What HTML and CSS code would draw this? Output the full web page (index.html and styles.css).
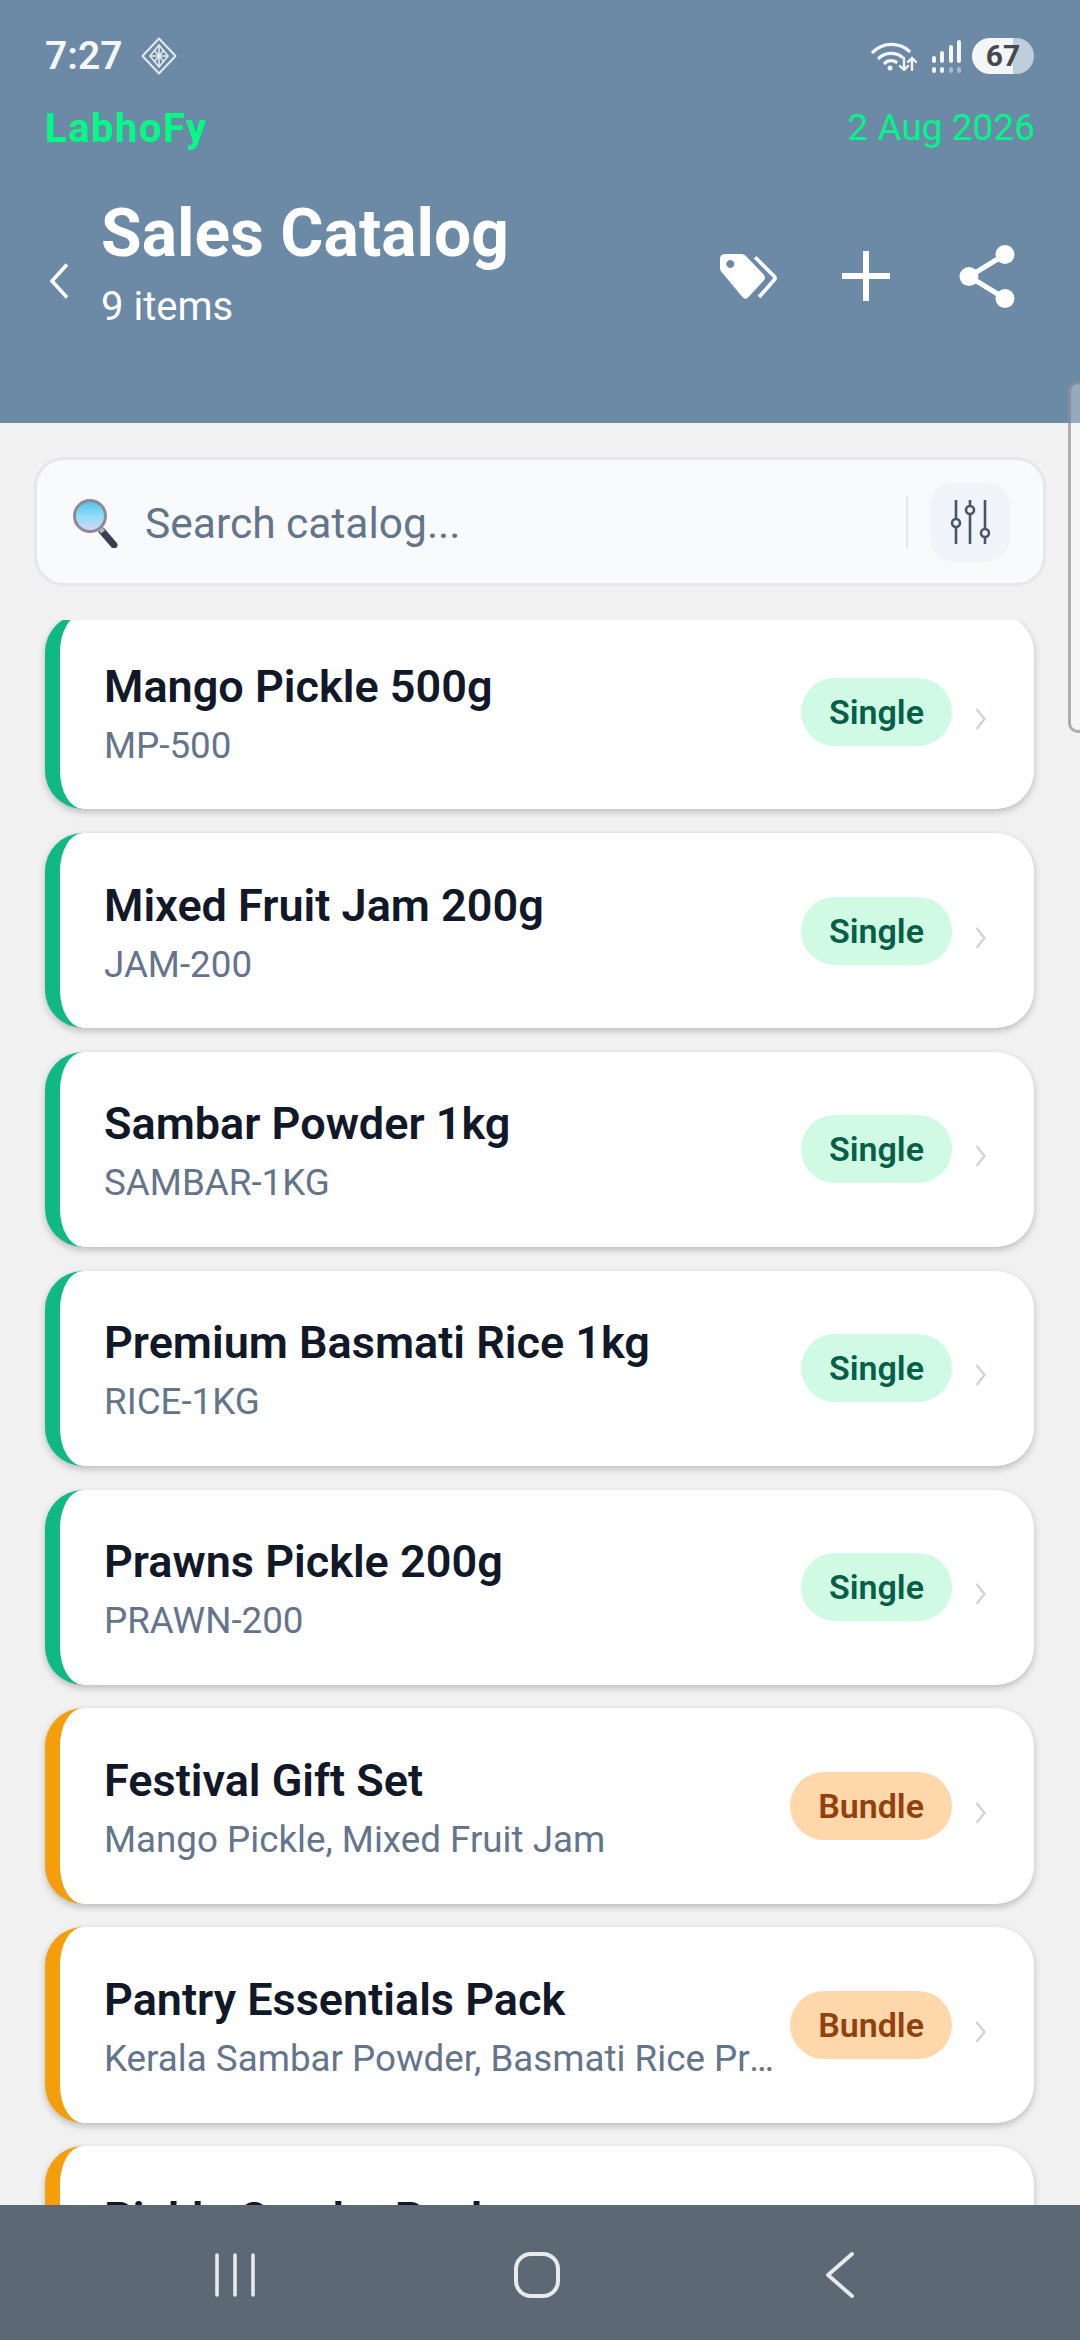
FILE: index.html
```html
<!DOCTYPE html>
<html lang="en">
<head>
<meta charset="utf-8">
<title>Sales Catalog</title>
<link rel="stylesheet" href="styles.css">
</head>
<body>
<div class="app">
  <header class="header">
    <div class="status">
      <div class="status-left">
        <span class="time">7:27</span>
        <svg class="status-diamond" viewBox="0 0 36 38" fill="none" stroke="#e4eaf0" stroke-width="2">
          <path d="M18 1.500 34.500 19 18 36.500 1.500 19Z" stroke-linejoin="round"/>
          <path d="M18 8 27 19 18 30 9 19Z" stroke-width="1.600"/>
          <path d="M9 19H27M18 8V30M13 13l10 12M23 13 13 25" stroke-width="1.600"/>
        </svg>
      </div>
      <div class="status-right">
        <svg class="wifi" viewBox="0 0 47 29" fill="none" stroke="#f3f5f7" stroke-width="3.400" stroke-linecap="round">
          <path d="M2 10C12 0 28 0 38 9"/>
          <path d="M8 16C14 10 25 10 31 15"/>
          <path d="M14 21C17 18 22 18 25 20"/>
          <circle cx="19" cy="26" r="2.500" fill="#f3f5f7" stroke="none"/>
          <path d="M33 16V28M29 24l4 4 4-4" stroke-width="2.400"/>
          <path d="M41 28V16M37 20l4-4 4 4" stroke-width="2.400"/>
        </svg>
        <svg class="signal" viewBox="0 0 31 33" stroke-linecap="round" fill="none" stroke-width="4">
          <path d="M4 18V21M12 13V21M21 7V21M29 2V21M4 29V31M12 29V31" stroke="#f3f5f7"/>
          <path d="M21 29V31M29 29V31" stroke="#a9bacb"/>
        </svg>
        <div class="battery"><span class="battery-num">67</span></div>
      </div>
    </div>
    <div class="brand-row">
      <span class="brand">LabhoFy</span>
      <span class="date">2 Aug 2026</span>
    </div>
    <div class="title-row">
      <svg class="back" viewBox="0 0 20 36" fill="none" stroke="#fff" stroke-width="3.600"><path d="M18 1.500 3 18 18 34.500"/></svg>
      <div class="title-col">
        <h1 class="title">Sales Catalog</h1>
        <div class="subtitle">9 items</div>
      </div>
      <div class="actions">
        <svg class="icon-tag" viewBox="60 90 172 140">
          <path fill="#fff" fill-rule="evenodd" d="M76 92h48q8 0 14 6l54 56q8 9 0 18l-46 50q-8 9-17 1L68 150q-8-7-8-16V108q0-16 16-16zM91 110a12 12 0 1 0 .01 0z"/>
          <path fill="none" stroke="#fff" stroke-width="11" d="M166 102 224 160q4 5 0 10L178 222"/>
        </svg>
        <svg class="icon-plus" viewBox="0 0 48 50" fill="none" stroke="#fff" stroke-width="6"><path d="M24 0V50M0 25H48"/></svg>
        <svg class="icon-share" viewBox="0 0 56 63" fill="#fff">
          <circle cx="46" cy="9.500" r="9.500"/><circle cx="10" cy="31.500" r="9.500"/><circle cx="46" cy="53.500" r="9.500"/>
          <path d="M46 9.500 10 31.500 46 53.500" fill="none" stroke="#fff" stroke-width="5"/>
        </svg>
      </div>
    </div>
  </header>

  <div class="search-wrap">
    <div class="search">
      <svg class="search-icon" viewBox="0 0 46 50">
        <defs>
          <linearGradient id="lens" x1="0" y1="0" x2="0" y2="1">
            <stop offset="0" stop-color="#4dbfea"/><stop offset=".5" stop-color="#90def6"/><stop offset="1" stop-color="#dcd4f6"/>
          </linearGradient>
        </defs>
        <path d="M29 33 41 47" stroke="#3f3c52" stroke-width="7" stroke-linecap="round"/>
        <path d="M27 30l3 4" stroke="#b5b5bc" stroke-width="5"/>
        <circle cx="17" cy="18" r="15.500" fill="url(#lens)" stroke="#8d8a96" stroke-width="3"/>
      </svg>
      <span class="search-text">Search catalog...</span>
      <span class="search-divider"></span>
      <div class="filter-btn">
        <svg class="filter-icon" viewBox="0 0 40 46" fill="#f1f5f9" stroke="#475569" stroke-width="2.600">
          <path d="M6 1V45M20 1V45M35 1V45"/>
          <circle cx="6" cy="24" r="4"/><circle cx="20" cy="11" r="4"/><circle cx="35" cy="34" r="4"/>
        </svg>
      </div>
    </div>
  </div>

  <main class="list">
    <div class="list-inner">
      <article class="card card-single">
        <div class="card-body"><div class="name">Mango Pickle 500g</div><div class="sub">MP-500</div></div>
        <span class="pill pill-single">Single</span>
        <svg class="chev" viewBox="0 0 11 22" fill="none" stroke="#cbd5e1" stroke-width="2.400"><path d="M1.500 1 9.500 11 1.500 21"/></svg>
      </article>
      <article class="card card-single">
        <div class="card-body"><div class="name">Mixed Fruit Jam 200g</div><div class="sub">JAM-200</div></div>
        <span class="pill pill-single">Single</span>
        <svg class="chev" viewBox="0 0 11 22" fill="none" stroke="#cbd5e1" stroke-width="2.400"><path d="M1.500 1 9.500 11 1.500 21"/></svg>
      </article>
      <article class="card card-single">
        <div class="card-body"><div class="name">Sambar Powder 1kg</div><div class="sub">SAMBAR-1KG</div></div>
        <span class="pill pill-single">Single</span>
        <svg class="chev" viewBox="0 0 11 22" fill="none" stroke="#cbd5e1" stroke-width="2.400"><path d="M1.500 1 9.500 11 1.500 21"/></svg>
      </article>
      <article class="card card-single">
        <div class="card-body"><div class="name">Premium Basmati Rice 1kg</div><div class="sub">RICE-1KG</div></div>
        <span class="pill pill-single">Single</span>
        <svg class="chev" viewBox="0 0 11 22" fill="none" stroke="#cbd5e1" stroke-width="2.400"><path d="M1.500 1 9.500 11 1.500 21"/></svg>
      </article>
      <article class="card card-single">
        <div class="card-body"><div class="name">Prawns Pickle 200g</div><div class="sub">PRAWN-200</div></div>
        <span class="pill pill-single">Single</span>
        <svg class="chev" viewBox="0 0 11 22" fill="none" stroke="#cbd5e1" stroke-width="2.400"><path d="M1.500 1 9.500 11 1.500 21"/></svg>
      </article>
      <article class="card card-bundle">
        <div class="card-body"><div class="name">Festival Gift Set</div><div class="sub">Mango Pickle, Mixed Fruit Jam</div></div>
        <span class="pill pill-bundle">Bundle</span>
        <svg class="chev" viewBox="0 0 11 22" fill="none" stroke="#cbd5e1" stroke-width="2.400"><path d="M1.500 1 9.500 11 1.500 21"/></svg>
      </article>
      <article class="card card-bundle">
        <div class="card-body"><div class="name">Pantry Essentials Pack</div><div class="sub">Kerala Sambar Powder, Basmati Rice Premium</div></div>
        <span class="pill pill-bundle">Bundle</span>
        <svg class="chev" viewBox="0 0 11 22" fill="none" stroke="#cbd5e1" stroke-width="2.400"><path d="M1.500 1 9.500 11 1.500 21"/></svg>
      </article>
      <article class="card card-bundle">
        <div class="card-body"><div class="name">Pickle Combo Pack</div><div class="sub">Mango Pickle, Prawns Pickle</div></div>
        <span class="pill pill-bundle">Bundle</span>
        <svg class="chev" viewBox="0 0 11 22" fill="none" stroke="#cbd5e1" stroke-width="2.400"><path d="M1.500 1 9.500 11 1.500 21"/></svg>
      </article>
    </div>
  </main>

  <nav class="navbar">
    <svg class="nav-recent" viewBox="0 0 42 44" fill="none" stroke="#e8eaec" stroke-width="3.600" stroke-linecap="round"><path d="M3 2V42M21 2V42M39 2V42"/></svg>
    <svg class="nav-home" viewBox="0 0 46 46" fill="none" stroke="#e8eaec" stroke-width="4"><rect x="2" y="2" width="42" height="42" rx="15"/></svg>
    <svg class="nav-back" viewBox="0 0 30 46" fill="none" stroke="#e8eaec" stroke-width="3.800" stroke-linecap="round" stroke-linejoin="round"><path d="M27 2 3 23 27 44"/></svg>
  </nav>

  <div class="edge-handle"></div>
</div>
</body>
</html>
```
FILE: styles.css
```css
* { box-sizing: border-box; }
html, body { margin: 0; padding: 0; }
body { width: 1080px; height: 2340px; overflow: hidden; font-family: Roboto, "Liberation Sans", sans-serif; background: #f1f1f1; }
.app { position: relative; width: 1080px; height: 2340px; display: flex; flex-direction: column; overflow: hidden; }

.header { height: 423px; flex: none; background: #6c89a6; padding: 37px 45px 0 45px; color: #fff; }
.status { display: flex; justify-content: space-between; align-items: center; height: 38px; }
.status-left { display: flex; align-items: center; gap: 18px; }
.time { font-size: 39px; line-height: 46px; font-weight: 600; color: #f3f5f7; }
.status-diamond { width: 38px; height: 38px; }
.status-right { display: flex; align-items: center; margin-right: 1px; }
.wifi { width: 47px; height: 29px; margin-right: 12px; }
.signal { width: 31px; height: 33px; margin-right: 11px; }
.battery { width: 62px; height: 36px; border-radius: 18px; background: linear-gradient(90deg, #f3f5f7 0 41px, #bfcddb 41px); display: flex; align-items: center; justify-content: center; }
.battery-num { font-size: 30px; line-height: 36px; font-weight: 700; color: #46484d; }

.brand-row { display: flex; justify-content: space-between; align-items: center; margin-top: 30px; height: 44px; }
.brand { font-size: 40px; font-weight: 700; letter-spacing: 1.5px; color: #00fb85; margin-top: 3px; }
.date { font-size: 37px; color: #00f58a; }

.title-row { display: flex; align-items: center; margin-top: 46px; }
.back { width: 20px; height: 36px; margin: 36px 32px 0 4px; flex: none; }
.title-col { flex: 1; min-width: 0; }
.title { margin: 0; font-size: 66px; line-height: 78px; font-weight: 700; color: #fff; }
.subtitle { margin-top: 10px; font-size: 40px; line-height: 48px; color: #fff; }
.actions { display: flex; align-items: center; margin-top: 26px; margin-right: 20px; }
.icon-tag { width: 57px; height: 47px; flex: none; }
.icon-plus { width: 48px; height: 50px; margin-left: 65px; flex: none; }
.icon-share { width: 56px; height: 63px; margin-left: 69px; flex: none; }

.search-wrap { flex: none; padding: 34px 34px; }
.search { height: 129px; display: flex; align-items: center; border: 3px solid #e2e8f0; border-radius: 30px; background: #f8fafc; padding: 0 33px 0 36px; }
.search-icon { width: 46px; height: 50px; flex: none; margin-top: 2px; }
.search-text { flex: 1; margin: 4px 0 0 26px; font-size: 42.5px; color: #64748b; }
.search-divider { width: 2px; height: 52px; background: #e2e8f0; margin-right: 22px; }
.filter-btn { width: 80px; height: 80px; border-radius: 24px; background: #f1f5f9; display: flex; align-items: center; justify-content: center; }
.filter-icon { width: 40px; height: 46px; }

.list { flex: 1; min-height: 0; overflow: hidden; padding: 0 46px 0 45px; }
.list-inner { margin-top: -6px; display: flex; flex-direction: column; gap: 23.5px; }
.card { flex: none; height: 195.4px; display: flex; align-items: center; background: #fff; border-radius: 38px; border-left: 15px solid #10b981; padding: 0 48px 0 44px; box-shadow: 0 3px 7px rgba(0,0,0,.22); }
.card-bundle { border-left-color: #f59e0b; }
.card-body { flex: 1; min-width: 0; margin-top: 4px; }
.name { font-size: 45px; line-height: 54px; font-weight: 600; color: #111827; white-space: nowrap; }
.sub { margin-top: 10px; font-size: 36.75px; line-height: 44px; color: #64748b; white-space: nowrap; overflow: hidden; text-overflow: ellipsis; }
.pill { flex: none; height: 68px; line-height: 68px; border-radius: 34px; font-size: 34px; font-weight: 600; padding: 0 28px; margin-left: 14px; }
.pill-single { background: #d1fae5; color: #065f46; }
.pill-bundle { background: #fed7aa; color: #92400e; }
.chev { width: 11px; height: 22px; flex: none; margin: 14px 0 0 23px; }

.navbar { position: relative; flex: none; height: 135px; background: #5c6874; }
.nav-recent { position: absolute; left: 214px; top: 48px; width: 42px; height: 44px; }
.nav-home { position: absolute; left: 514px; top: 47px; width: 46px; height: 46px; }
.nav-back { position: absolute; left: 825px; top: 47px; width: 30px; height: 46px; }

.edge-handle { position: absolute; left: 1068px; top: 381px; width: 20px; height: 352px; border: 3px solid rgba(120,125,130,.6); border-radius: 14px; background: rgba(255,255,255,.28); }
```
